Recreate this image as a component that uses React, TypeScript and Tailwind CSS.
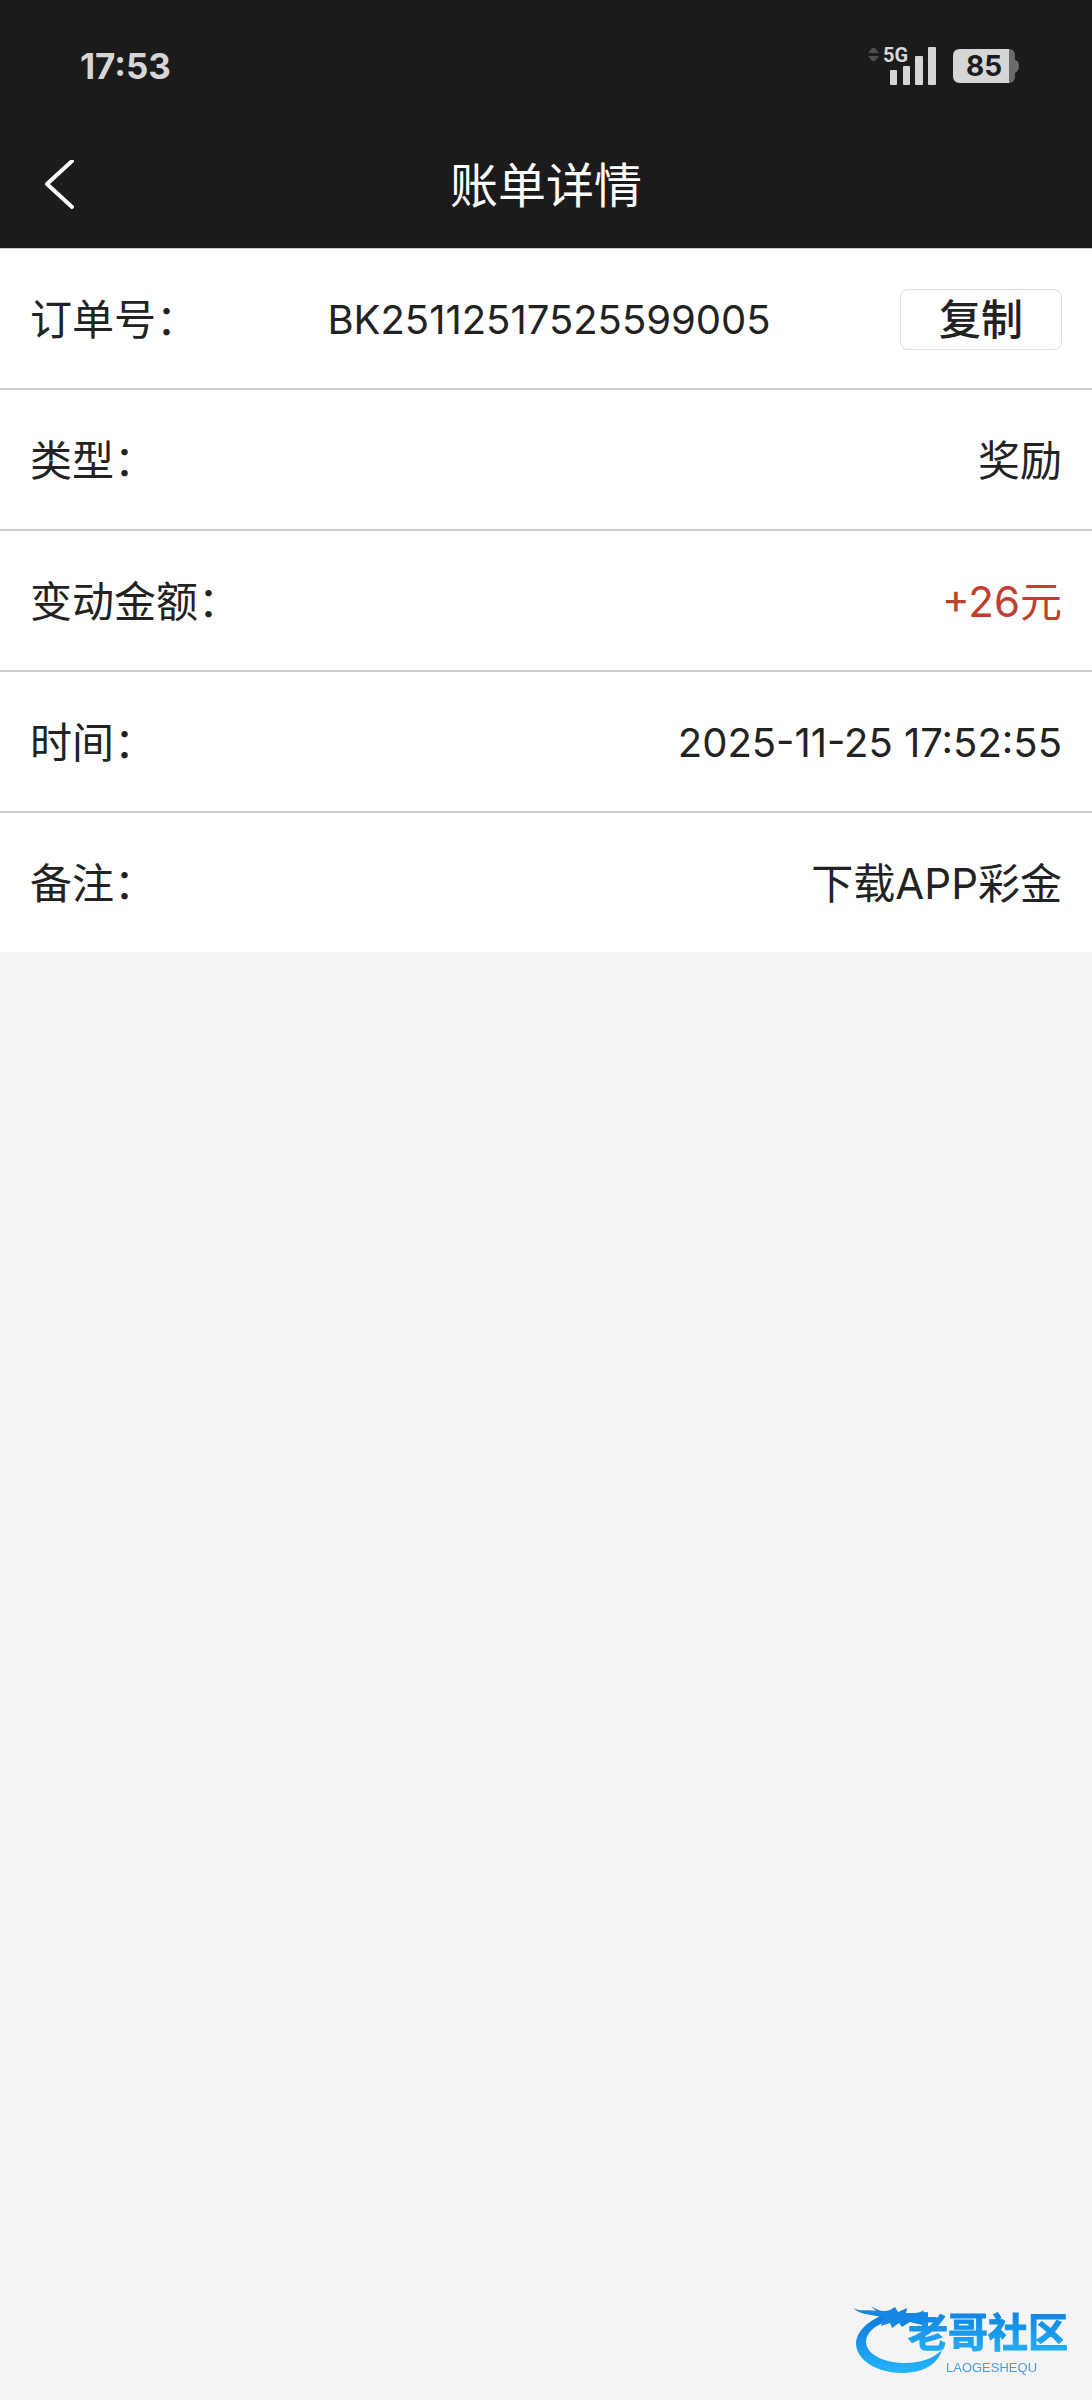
import React from 'react';

interface BillRow {
    label: string;
    value: string;
    valueClass?: string;
    copyable?: boolean;
}

const rows: BillRow[] = [
    { label: '订单号：', value: 'BK25112517525599005', valueClass: 'text-[40px]', copyable: true },
    { label: '类型：', value: '奖励' },
    { label: '变动金额：', value: '+26元', valueClass: 'text-[#c0402f]' },
    { label: '时间：', value: '2025-11-25 17:52:55', valueClass: 'text-[40px]' },
    { label: '备注：', value: '下载APP彩金' },
];

const StatusBar: React.FC = () => (
    <div className="flex h-[132px] items-center justify-between pl-20 pr-[73px] text-[#d6d6d6]">
        <span className="text-[35px] leading-10 font-bold">17:53</span>

        <div className="flex items-center gap-4">
            {/* Network type + signal strength */}
            <svg width="68" height="48" viewBox="0 -5 68 48" fill="currentColor" aria-label="5G">
                <path d="M0 6 L4 1 H7 L11 6 Z M0 9 H11 L7 14 H4 Z" fill="#4d4d4d" />
                <text x="15" y="15" fontSize="20" fontWeight="700" fontFamily="Roboto, sans-serif">5G</text>
                <rect x="22" y="23" width="7" height="15" rx="1" />
                <rect x="35" y="19" width="7" height="19" rx="1" />
                <rect x="47" y="9" width="8" height="29" rx="1" />
                <rect x="60" y="0" width="8" height="38" rx="1" />
            </svg>

            {/* Battery */}
            <svg width="67" height="36" viewBox="0 0 67 36" aria-label="85%">
                <path d="M57 1 Q63 1 63 8 V12 Q67 13 67 18 Q67 23 63 25 V28 Q63 35 57 35 Z" fill="#6b6b6b" />
                <path d="M8 1 H57 V35 H8 Q1 35 1 28 V8 Q1 1 8 1 Z" fill="#d6d6d6" />
                <text x="32" y="28" textAnchor="middle" fontSize="28" fontWeight="700" fontFamily="Inter, sans-serif" fill="#1c1c1c">85</text>
            </svg>
        </div>
    </div>
);

const Watermark: React.FC = () => (
    <div className="fixed right-4 bottom-6">
        <svg width="224" height="76" viewBox="0 0 224 76" aria-hidden="true">
            <defs>
                <linearGradient id="wave" x1="0" y1="0" x2="0" y2="1">
                    <stop offset="0" stopColor="#0b78dc" />
                    <stop offset="1" stopColor="#27b4fb" />
                </linearGradient>
            </defs>
            {/* Dragon body */}
            <path
                d="M34 14 C16 20 4 32 4 44 C5 61 26 73 50 73 C71 73 86 64 90 50 C82 58 69 63 54 63 C34 63 15 56 14 42 C14 32 24 24 40 20 Z"
                fill="url(#wave)"
            />
            {/* Head, horns and whiskers */}
            <path
                d="M1 8 C9 12 16 9 24 11 L19 6 C26 11 32 12 38 10 L43 7 L46 12 L55 8 L54 13 C61 13 67 14 72 10 L70 15 L74 17 L64 19 L72 22 L70 25 L58 22 L50 27 L47 23 L40 28 L38 23 L29 26 L31 18 C24 14 9 16 1 8 Z"
                fill="#1686e2"
            />
            <text
                x="56"
                y="47"
                fontSize="40"
                fontWeight="700"
                fontFamily="'Noto Sans CJK SC', sans-serif"
                fill="url(#wave)"
                stroke="url(#wave)"
                strokeWidth="1"
            >
                老哥社区
            </text>
            <text x="94" y="72" fontSize="13" fontFamily="'Liberation Sans', sans-serif" fill="#4a9fe0">LAOGESHEQU</text>
        </svg>
    </div>
);

const App: React.FC = () => {
    const handleCopy = (text: string) => {
        navigator.clipboard?.writeText(text);
    };

    return (
        <div className="min-h-screen bg-[#f4f4f4] font-['Inter','Noto_Sans_CJK_SC',sans-serif] text-[#222222]" lang="zh-CN">
            <header className="bg-[#1b1b1b]">
                <StatusBar />
                <div className="grid h-[116px] grid-cols-[1fr_auto_1fr] items-center px-11 pb-2 text-white">
                    <button type="button" aria-label="返回" className="w-fit">
                        <svg width="30" height="52" viewBox="0 0 30 52" fill="none" stroke="currentColor" strokeWidth="4" strokeLinecap="round" strokeLinejoin="round">
                            <path d="M28 1 L3 24 L28 47" />
                        </svg>
                    </button>
                    <h1 className="text-[48px] leading-[56px]">账单详情</h1>
                </div>
            </header>

            <dl className="border-t border-[#cccccc] bg-white text-[42px] leading-[55px]">
                {rows.map((row) => (
                    <div
                        key={row.label}
                        className="flex items-center justify-between border-b-2 border-[#cccccc] px-[30px] pt-[43px] pb-[41px] last:border-b-0"
                    >
                        <dt>{row.label}</dt>
                        <dd className={row.valueClass}>{row.value}</dd>
                        {row.copyable && (
                            <button
                                type="button"
                                onClick={() => handleCopy(row.value)}
                                className="-my-1 h-[61px] w-[162px] rounded-lg border border-[#e0e0e0] font-medium"
                            >
                                复制
                            </button>
                        )}
                    </div>
                ))}
            </dl>

            <Watermark />
        </div>
    );
};

export default App;
